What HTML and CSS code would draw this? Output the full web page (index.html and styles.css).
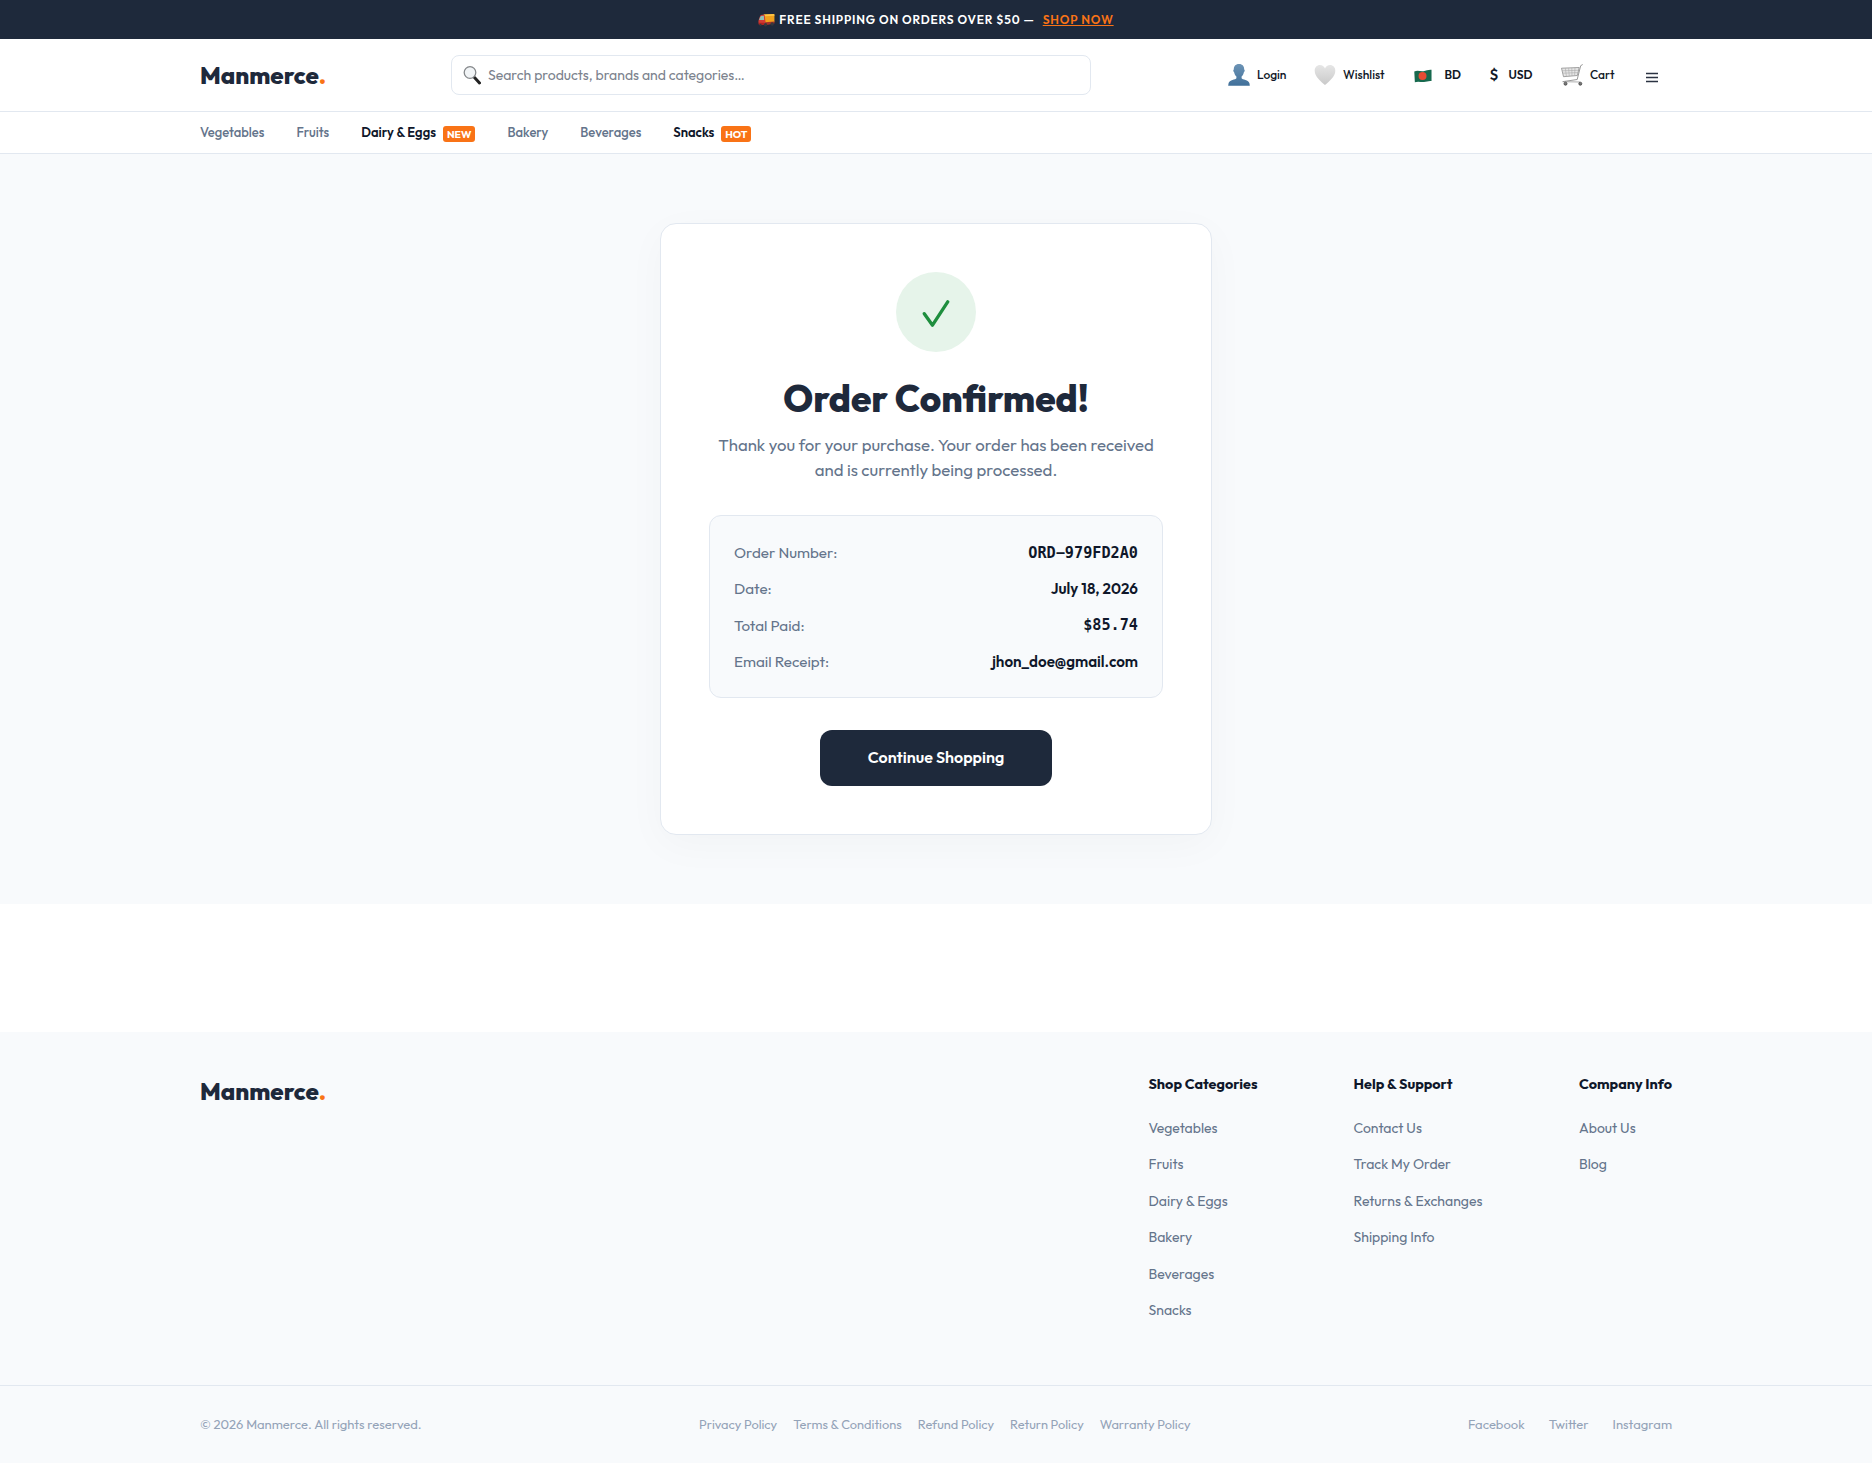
FILE: index.html
```html
<!DOCTYPE html>
<html lang="en">
<head>
    <meta charset="UTF-8">
    <meta name="viewport" content="width=device-width, initial-scale=1.0">
    <title>Order Confirmed - Manmerce</title>
    <link rel="stylesheet" href="styles.css">
</head>
<body>
    <div class="topbar">
        <svg class="truck" viewBox="0 0 18 14">
            <path d="M6 1.200L16.500.6q.9 0 .9.900V9L8 11.500z" fill="#f0a01c"/>
            <path d="M6 1.200L16.500.6q.9 0 .9.900v1L6.500 3z" fill="#fdc445"/>
            <path d="M2.200 2.800Q3 1.600 4.500 1.500L7 1.400 8.300 12 1 11.700Q0 9 .8 6.800z" fill="#d03a34"/>
            <path d="M1.200 7Q2 3.300 3.200 2.800l3-.3.300 4.500z" fill="#8fbfb8"/>
            <path d="M7.500 9.500l10-1v2.300l-9.300 1.700z" fill="#a3312a"/>
            <path d="M.8 10h6v2.300H1z" fill="#b3231f"/>
            <circle cx="8" cy="12" r="1.800" fill="#37373c"/>
            <circle cx="15" cy="11.200" r="1.800" fill="#37373c"/>
            <circle cx="2.600" cy="12.300" r="1.200" fill="#37373c"/>
        </svg>
        <span class="promo">FREE SHIPPING ON ORDERS OVER $50 —</span>
        <a href="#">SHOP NOW</a>
    </div>

    <header class="header">
        <div class="container header-row">
            <a href="#" class="logo">Manmerce<span>.</span></a>
            <form class="search">
                <svg class="lens" viewBox="0 0 18 20">
                    <path d="M11.500 12.500l5 5.500" stroke="#222" stroke-width="3" stroke-linecap="round"/>
                    <circle cx="7" cy="7.500" r="5.800" fill="#f1f4f6" stroke="#85888b" stroke-width="1.300"/>
                </svg>
                <input type="text" placeholder="Search products, brands and categories…">
            </form>
            <div class="actions">
                <a href="#" class="login">
                    <svg viewBox="0 0 22 22">
                        <defs>
                            <linearGradient id="person" x1="0" y1="0" x2="0" y2="1">
                                <stop offset="0" stop-color="#6c93b5"/>
                                <stop offset="1" stop-color="#41709a"/>
                            </linearGradient>
                        </defs>
                        <path d="M11 0c3.600 0 5.300 2.400 5.200 5.600.8.200.7 2-.3 2.700-.4 2-1.200 3.200-2.300 4.200v1.800c.6 1.400 7.200 1.600 7.900 5.200l.3 2.300H.2l.3-2.300c.7-3.600 7.300-3.800 7.900-5.200v-1.800C7.300 11.500 6.500 10.300 6.100 8.300c-1-.7-1.100-2.500-.3-2.700C5.700 2.400 7.400 0 11 0z" fill="url(#person)"/>
                    </svg>
                    <span>Login</span>
                </a>
                <a href="#" class="wishlist">
                    <svg viewBox="0 0 22 22">
                        <defs>
                            <linearGradient id="heart" x1="0" y1="0" x2="0" y2="1">
                                <stop offset="0" stop-color="#e6e6e6"/>
                                <stop offset="1" stop-color="#c9c9c9"/>
                            </linearGradient>
                        </defs>
                        <path d="M11 21C7 17.500.7 12.700.7 6.700.7 3.300 3 1 5.900 1 8.300 1 10.100 2.500 11 4.500 11.900 2.500 13.700 1 16.100 1c2.900 0 5.200 2.300 5.200 5.700C21.300 12.700 15 17.500 11 21z" fill="url(#heart)"/>
                    </svg>
                    <span>Wishlist</span>
                </a>
                <a href="#" class="country">
                    <svg class="flag" viewBox="0 0 19 14">
                        <path d="M.3 2.200c4-1.700 6.700.4 9.700-.3S16 .1 18.500.5v11.800c-3-.5-5 .7-8 1S4 12.200.9 13.700z" fill="#17694e"/>
                        <circle cx="9" cy="7" r="4.200" fill="#e64b33"/>
                    </svg>
                    <b>BD</b>
                </a>
                <a href="#" class="currency"><b class="dollar">$</b><b>USD</b></a>
                <a href="#" class="cart">
                    <svg viewBox="0 0 22 22" fill="none">
                        <path d="M.5 4.200l17.700-.7L16.400 11.500 2.500 12.700z" fill="#e6e6e6" stroke="#8d8d8d" stroke-width=".8"/>
                        <path d="M1 6.800l16.500-.5M1.600 9.200l15.400-.6M4.400 4.200l1 8.300M7.600 4.200l.7 8M10.800 4l.2 8M14 3.800l-.4 7.800" stroke="#aaa" stroke-width=".6"/>
                        <path d="M21.700.5l-2 1.200L16.200 15.500 1.500 17.700" stroke="#999" stroke-width="1"/>
                        <path d="M2 17.700l17 .3" stroke="#999" stroke-width=".8"/>
                        <circle cx="4.500" cy="19.700" r="1.500" fill="#777" stroke="#444" stroke-width=".8"/>
                        <circle cx="19.300" cy="19.700" r="1.500" fill="#777" stroke="#444" stroke-width=".8"/>
                    </svg>
                    <span>Cart</span>
                </a>
                <svg class="menu" viewBox="0 0 12 11">
                    <path d="M0 1.500h12M0 5.500h12M0 9.500h12" stroke="#2b3342" stroke-width="1.600"/>
                </svg>
            </div>
        </div>
    </header>

    <nav class="nav">
        <div class="container nav-row">
            <a href="#">Vegetables</a>
            <a href="#">Fruits</a>
            <a href="#" class="active">Dairy &amp; Eggs<span class="badge">NEW</span></a>
            <a href="#">Bakery</a>
            <a href="#">Beverages</a>
            <a href="#" class="active">Snacks<span class="badge">HOT</span></a>
        </div>
    </nav>

    <main class="main">
        <div class="card">
            <div class="check">
                <svg viewBox="0 0 28 28" fill="none">
                    <path d="M2.300 13.700L10.500 25.200 25.700 1.800" stroke="#1e8e3e" stroke-width="3.300" stroke-linecap="round" stroke-linejoin="round"/>
                </svg>
            </div>
            <h1>Order Confirmed!</h1>
            <p class="message">Thank you for your purchase. Your order has been received<br>and is currently being processed.</p>
            <div class="details">
                <div class="row"><span>Order Number:</span><b class="mono">ORD−979FD2A0</b></div>
                <div class="row"><span>Date:</span><b>July 18, 2026</b></div>
                <div class="row"><span>Total Paid:</span><b class="mono">$85.74</b></div>
                <div class="row"><span>Email Receipt:</span><b>jhon_doe@gmail.com</b></div>
            </div>
            <a href="#" class="btn">Continue Shopping</a>
        </div>
    </main>

    <footer class="footer">
        <div class="container footer-top">
            <a href="#" class="logo">Manmerce<span>.</span></a>
            <div class="footer-col shop">
                <h4>Shop Categories</h4>
                <a href="#">Vegetables</a>
                <a href="#">Fruits</a>
                <a href="#">Dairy &amp; Eggs</a>
                <a href="#">Bakery</a>
                <a href="#">Beverages</a>
                <a href="#">Snacks</a>
            </div>
            <div class="footer-col help">
                <h4>Help &amp; Support</h4>
                <a href="#">Contact Us</a>
                <a href="#">Track My Order</a>
                <a href="#">Returns &amp; Exchanges</a>
                <a href="#">Shipping Info</a>
            </div>
            <div class="footer-col company">
                <h4>Company Info</h4>
                <a href="#">About Us</a>
                <a href="#">Blog</a>
            </div>
        </div>
        <div class="footer-bottom">
            <div class="container bottom-row">
                <span class="copyright">© 2026 Manmerce. All rights reserved.</span>
                <div class="legal">
                    <a href="#">Privacy Policy</a>
                    <a href="#">Terms &amp; Conditions</a>
                    <a href="#">Refund Policy</a>
                    <a href="#">Return Policy</a>
                    <a href="#">Warranty Policy</a>
                </div>
                <div class="social">
                    <a href="#">Facebook</a>
                    <a href="#">Twitter</a>
                    <a href="#">Instagram</a>
                </div>
            </div>
        </div>
    </footer>
</body>
</html>
```
FILE: styles.css
```css
* {
    box-sizing: border-box;
}

body {
    margin: 0;
    font-family: "Outfit", "Lato", sans-serif;
    color: #1e293b;
    background: #fff;
}

a {
    color: inherit;
    text-decoration: none;
}

svg {
    display: block;
    flex-shrink: 0;
}

.container {
    width: 1472px;
    margin: 0 auto;
}

/* top bar */
.topbar {
    height: 39px;
    display: flex;
    align-items: center;
    justify-content: center;
    background: #1e293b;
    color: #fff;
    font-size: 12px;
    font-weight: 600;
    letter-spacing: 0.8px;
}
.truck {
    width: 17px;
    height: 14px;
    margin-right: 4px;
}
.topbar a {
    margin-left: 8px;
    color: #f97316;
    text-decoration: underline;
}

/* header */
.header {
    height: 73px;
    border-bottom: 1px solid #e2e8f0;
}
.header-row {
    height: 72px;
    display: flex;
    align-items: center;
}
.logo {
    width: 251px;
    font-size: 24px;
    font-weight: 800;
    line-height: 30px;
}
.logo span {
    color: #f97316;
}
.search {
    width: 640px;
    height: 40px;
    margin: 0;
    padding-left: 11px;
    display: flex;
    align-items: center;
    border: 1px solid #e2e8f0;
    border-radius: 8px;
}
.lens {
    width: 18px;
    height: 20px;
}
.search input {
    flex: 1;
    margin-left: 7px;
    padding: 0;
    border: none;
    outline: none;
    background: none;
    font: 14px "Outfit", "Lato", sans-serif;
}
.search input::placeholder {
    color: #7b828d;
}
.actions {
    flex: 1;
    display: flex;
    align-items: center;
    margin-left: 137px;
    font-size: 12px;
    font-weight: 500;
    line-height: 22px;
    color: #111827;
}
.actions a {
    display: flex;
    align-items: center;
    flex-shrink: 0;
}
.actions b {
    font-weight: 600;
}
.actions a svg {
    width: 22px;
    height: 22px;
    margin-right: 7px;
}
.actions .login { width: 86px; }
.actions .wishlist { width: 100px; }
.actions .country { width: 75.5px; }
.actions .currency { width: 71.5px; }
.actions .cart { width: 84.5px; }
.actions a .flag {
    width: 18px;
    height: 14px;
    margin: 2px 12.5px 0 0;
}
.actions .dollar {
    width: 19px;
    font-size: 15px;
}
.menu {
    width: 12px;
    height: 11px;
    margin-top: 5px;
}

/* category nav */
.nav {
    height: 42px;
    border-bottom: 1px solid #e2e8f0;
}
.nav-row {
    height: 39px;
    display: flex;
    align-items: center;
    gap: 32px;
    font-size: 13px;
    font-weight: 500;
    color: #64748b;
}
.nav-row a {
    display: flex;
    align-items: center;
}
.nav-row .active {
    color: #0f172a;
    font-weight: 600;
}
.nav-row .badge {
    height: 16px;
    margin: 4px 0 0 7px;
    padding: 0 4px;
    border-radius: 3px;
    background: #f97316;
    color: #fff;
    font-size: 10.4px;
    font-weight: 700;
    line-height: 17px;
}

/* confirmation */
.main {
    height: 750px;
    padding-top: 69px;
    background: #f8fafc;
}
.card {
    width: 552px;
    height: 612px;
    margin: 0 auto;
    padding: 48px;
    border: 1px solid #e2e8f0;
    border-radius: 16px;
    background: #fff;
    box-shadow: 0 10px 40px rgba(0, 0, 0, 0.03);
    text-align: center;
}
.check {
    width: 80px;
    height: 80px;
    margin: 0 auto 24px;
    display: flex;
    align-items: center;
    justify-content: center;
    border-radius: 50%;
    background: #e6f4ea;
}
.check svg {
    width: 28px;
    height: 28px;
    margin-top: 3px;
}
h1 {
    margin: 0;
    font-size: 36.8px;
    font-weight: 800;
    line-height: 46px;
}
.message {
    margin: 10px 0 33px;
    font-size: 16.8px;
    line-height: 25.2px;
    color: #64748b;
    white-space: nowrap;
}
.details {
    height: 183px;
    padding: 18px 24px;
    border: 1px solid #e2e8f0;
    border-radius: 12px;
    background: #f8fafc;
}
.row {
    height: 36.4px;
    display: flex;
    align-items: center;
    justify-content: space-between;
    font-size: 15.2px;
    color: #64748b;
}
.row b {
    color: #0f172a;
    font-weight: 600;
}
.row .mono {
    font-family: "DejaVu Sans Mono", monospace;
    font-weight: 700;
}
.btn {
    width: 232px;
    height: 56px;
    margin: 32px auto 0;
    display: block;
    border-radius: 12px;
    background: #1e293b;
    color: #fff;
    font-size: 16px;
    font-weight: 600;
    line-height: 55px;
}

/* footer */
.footer {
    height: 431px;
    margin-top: 128px;
    background: #f8fafc;
}
.footer-top {
    height: 353px;
    padding-top: 42px;
    display: flex;
}
.footer-top .logo {
    width: 948.5px;
    padding-top: 2px;
}
.footer-col {
    display: flex;
    flex-direction: column;
    white-space: nowrap;
}
.footer-col h4 {
    margin: 0 0 16px;
    font-size: 14.4px;
    font-weight: 700;
    line-height: 20px;
    color: #0f172a;
}
.footer-col a {
    font-size: 14px;
    line-height: 36.4px;
    color: #64748b;
}
.shop { width: 205px; }
.help { width: 225.5px; }
.footer-bottom {
    border-top: 1px solid #e2e8f0;
}
.bottom-row {
    height: 75px;
    display: flex;
    align-items: center;
    font-size: 13px;
    color: #94a3b8;
}
.copyright {
    width: 499px;
}
.legal {
    display: flex;
    gap: 16px;
    font-size: 12.8px;
}
.social {
    display: flex;
    gap: 24px;
    margin-left: auto;
}
```
